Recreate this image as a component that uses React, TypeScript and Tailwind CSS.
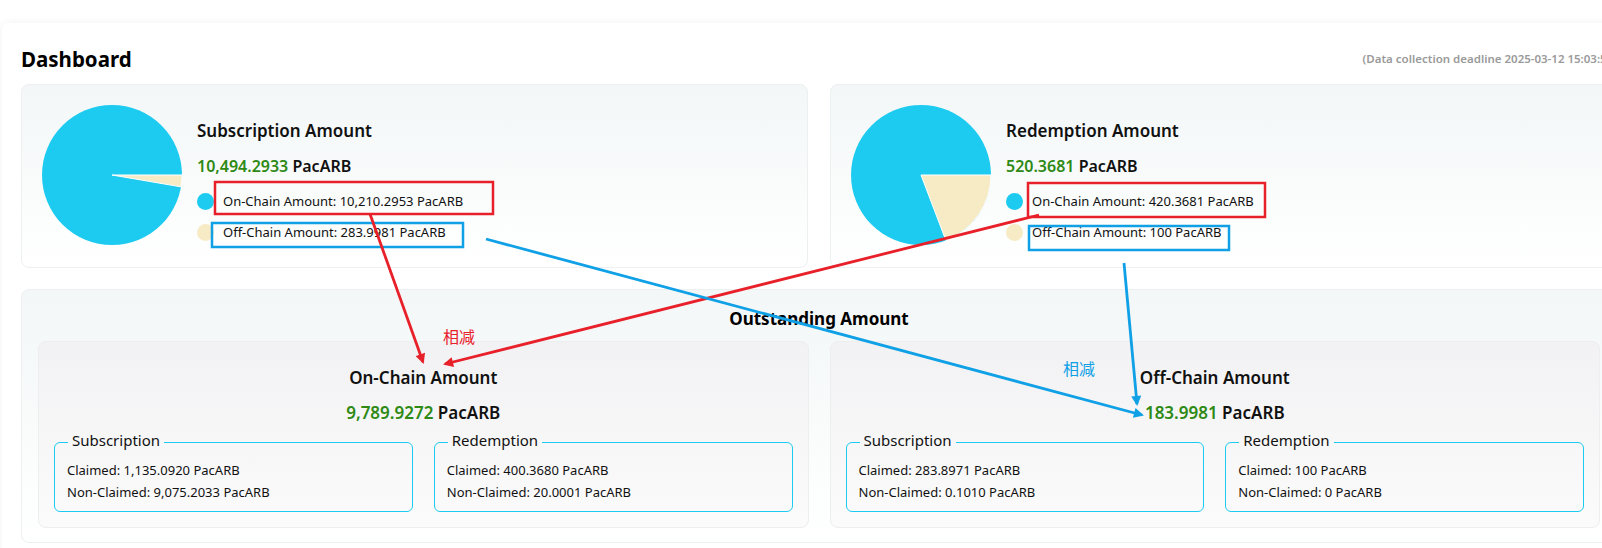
import React from "react";

const CYAN = "#1ecbf0";
const CREAM = "#f7ebc6";

interface PieProps {
  total: number;
  offChain: number;
}

function Pie({ total, offChain }: PieProps) {
  const r = 70;
  const angle = (offChain / total) * Math.PI * 2;
  const x = 70 + r * Math.cos(angle);
  const y = 70 + r * Math.sin(angle);
  const large = angle > Math.PI ? 1 : 0;
  return (
    <svg width="140" height="140" viewBox="0 0 140 140" className="shrink-0">
      <circle cx="70" cy="70" r={r} fill={CYAN} />
      <path
        d={`M70 70 L140 70 A70 70 0 ${large} 1 ${x} ${y} Z`}
        fill={CREAM}
        stroke="#ffffff"
        strokeWidth="1"
        strokeLinejoin="round"
      />
    </svg>
  );
}

function SummaryCard({
  title,
  amount,
  onChain,
  offChain,
  total,
  offValue,
}: {
  title: string;
  amount: string;
  onChain: string;
  offChain: string;
  total: number;
  offValue: number;
}) {
  return (
    <div className="flex h-[184px] items-start rounded-lg border border-[#edf0f0] bg-gradient-to-b from-[#f3f7f7] to-white p-[20px]">
      <Pie total={total} offChain={offValue} />
      <div className="ml-[15px] mt-[14px] flex flex-col">
        <div className="text-[17px] font-semibold leading-[24px] text-[#111]">{title}</div>
        <div className="mt-[11px] text-[16px] font-semibold leading-[24px]">
          <span className="text-[#2e8a14]">{amount}</span>{" "}
          <span className="text-[#111]">PacARB</span>
        </div>
        <div className="mt-[13px] flex items-center gap-[9px] text-[13px] leading-[20px] text-[#111]">
          <span className="h-[17px] w-[17px] rounded-full bg-[#1ecbf0]" />
          On-Chain Amount: {onChain} PacARB
        </div>
        <div className="mt-[11px] flex items-center gap-[9px] text-[13px] leading-[20px] text-[#111]">
          <span className="h-[17px] w-[17px] rounded-full bg-[#f7ebc6]" />
          Off-Chain Amount: {offChain} PacARB
        </div>
      </div>
    </div>
  );
}

function Split({ label, claimed, nonClaimed }: { label: string; claimed: string; nonClaimed: string }) {
  return (
    <fieldset className="rounded-md border border-[#1ecbf0] px-[12px] pb-[8px]">
      <legend className="ml-[1px] px-[4px] pb-[4px] text-[15px] leading-[20px] text-[#111]">{label}</legend>
      <div className="mt-[5px] text-[13px] leading-[22px] text-[#111]">Claimed: {claimed} PacARB</div>
      <div className="text-[13px] leading-[22px] text-[#111]">Non-Claimed: {nonClaimed} PacARB</div>
    </fieldset>
  );
}

function OutstandingCard({
  title,
  amount,
  sub,
  red,
}: {
  title: string;
  amount: string;
  sub: [string, string];
  red: [string, string];
}) {
  return (
    <div className="flex h-[187px] flex-col items-center rounded-lg border border-[#eceeef] bg-gradient-to-b from-[#f2f2f4] to-[#fbfbfb] px-[15px] pt-[24px]">
      <div className="text-[17px] font-semibold leading-[24px] text-[#111]">{title}</div>
      <div className="mt-[11px] text-[17px] font-semibold leading-[24px]">
        <span className="text-[#2e8a14]">{amount}</span> <span className="text-[#111]">PacARB</span>
      </div>
      <div className="mt-[5px] grid w-full grid-cols-2 gap-[21px]">
        <Split label="Subscription" claimed={sub[0]} nonClaimed={sub[1]} />
        <Split label="Redemption" claimed={red[0]} nonClaimed={red[1]} />
      </div>
    </div>
  );
}

function Annotations() {
  return (
    <svg className="pointer-events-none absolute left-0 top-0" width="1602" height="548">
      <defs>
        <marker id="ah-red" viewBox="0 0 10 10" refX="8" refY="5" markerWidth="4" markerHeight="3.6" orient="auto">
          <path d="M0 0 L10 5 L0 10 Z" fill="#e8202a" />
        </marker>
        <marker id="ah-blue" viewBox="0 0 10 10" refX="8" refY="5" markerWidth="4" markerHeight="3.6" orient="auto">
          <path d="M0 0 L10 5 L0 10 Z" fill="#0fa0e6" />
        </marker>
      </defs>
      {/* boxes */}
      <rect x="215" y="182" width="278" height="32" fill="none" stroke="#e8202a" strokeWidth="2.5" />
      <rect x="212" y="223" width="251" height="24" fill="none" stroke="#0fa0e6" strokeWidth="2.5" />
      <rect x="1028" y="183" width="237" height="34" fill="none" stroke="#e8202a" strokeWidth="2.5" />
      <rect x="1029" y="226" width="200" height="24" fill="none" stroke="#0fa0e6" strokeWidth="2.5" />
      {/* arrows */}
      <line x1="370" y1="214" x2="423" y2="362" stroke="#e8202a" strokeWidth="2.8" markerEnd="url(#ah-red)" />
      <line x1="1039" y1="215" x2="445" y2="364" stroke="#e8202a" strokeWidth="2.8" markerEnd="url(#ah-red)" />
      <line x1="486" y1="239" x2="1142" y2="415" stroke="#0fa0e6" strokeWidth="2.8" markerEnd="url(#ah-blue)" />
      <line x1="1124" y1="263" x2="1137" y2="404" stroke="#0fa0e6" strokeWidth="2.8" markerEnd="url(#ah-blue)" />
    </svg>
  );
}

export default function App() {
  return (
    <div className="relative h-[548px] w-[1602px] overflow-hidden bg-white font-['Noto_Sans','Noto_Sans_CJK_SC',sans-serif]">
      <div className="pl-[2px] pt-[23px]">
        <div className="w-[1634px] rounded-md bg-white px-[19px] pb-[20px] pt-[22px] shadow-[0_0_8px_rgba(0,0,0,0.06)]">
          <div className="flex h-[28px] items-center justify-between">
            <h1 className="text-[20.5px] font-bold leading-[28px] text-black">Dashboard</h1>
            <span className="text-[11.5px] font-semibold text-[#9a9a9a]">
              (Data collection deadline 2025-03-12 15:03:54)
            </span>
          </div>
          <div className="mt-[11px] grid grid-cols-2 gap-[22px]">
            <SummaryCard
              title="Subscription Amount"
              amount="10,494.2933"
              onChain="10,210.2953"
              offChain="283.9981"
              total={10494.2933}
              offValue={283.9981}
            />
            <SummaryCard
              title="Redemption Amount"
              amount="520.3681"
              onChain="420.3681"
              offChain="100"
              total={520.3681}
              offValue={100}
            />
          </div>
          <div className="mt-[21px] flex h-[254px] flex-col rounded-lg border border-[#edf0f0] bg-gradient-to-b from-[#f3f7f7] to-white px-[16px] pt-[17px]">
            <div className="text-center text-[17px] font-bold leading-[24px] text-black">Outstanding Amount</div>
            <div className="mt-[10px] grid grid-cols-2 gap-[21px]">
              <OutstandingCard
                title="On-Chain Amount"
                amount="9,789.9272"
                sub={["1,135.0920", "9,075.2033"]}
                red={["400.3680", "20.0001"]}
              />
              <OutstandingCard
                title="Off-Chain Amount"
                amount="183.9981"
                sub={["283.8971", "0.1010"]}
                red={["100", "0"]}
              />
            </div>
          </div>
        </div>
      </div>
      <Annotations />
      <span className="absolute left-[443px] top-[326px] text-[16px] leading-[22px] text-[#e8202a]">相减</span>
      <span className="absolute left-[1063px] top-[358px] text-[16px] leading-[22px] text-[#0fa0e6]">相减</span>
    </div>
  );
}
